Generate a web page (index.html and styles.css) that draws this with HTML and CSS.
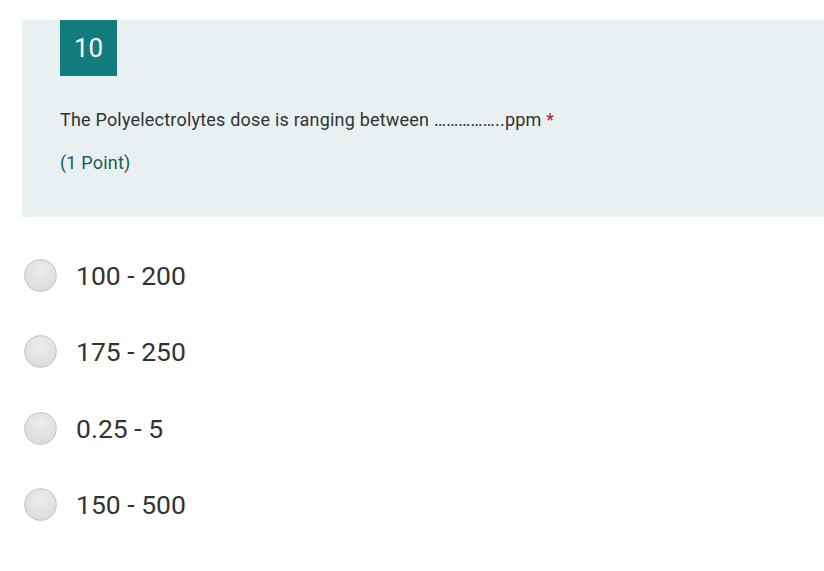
FILE: index.html
```html
<!DOCTYPE html>
<html>
<head>
<meta charset="utf-8">
<link rel="stylesheet" href="styles.css">
</head>
<body>
<div class="question">
  <div class="badge">10</div>
  <div class="title">The Polyelectrolytes dose is ranging between ……………..ppm <span class="req">*</span></div>
  <div class="points">(1 Point)</div>
</div>
<div class="options">
  <label class="option"><span class="radio"></span><span class="opt-text">100 - 200</span></label>
  <label class="option"><span class="radio"></span><span class="opt-text">175 - 250</span></label>
  <label class="option"><span class="radio"></span><span class="opt-text">0.25 - 5</span></label>
  <label class="option"><span class="radio"></span><span class="opt-text">150 - 500</span></label>
</div>
</body>
</html>
```
FILE: styles.css
```css
html, body {
  margin: 0;
  padding: 0;
  background: #ffffff;
  font-family: Roboto, "Liberation Sans", sans-serif;
}
.question {
  margin: 20px 0 0 22px;
  height: 197px;
  box-sizing: border-box;
  background: #e8f0f2;
  padding-left: 38px;
}
.badge {
  width: 57px;
  height: 56px;
  background: #127c7f;
  color: #ffffff;
  font-size: 26px;
  display: flex;
  align-items: center;
  justify-content: center;
}
.title {
  margin-top: 33px;
  font-size: 18px;
  letter-spacing: 0.2px;
  line-height: 22px;
  color: #333333;
}
.req {
  color: #a4262c;
}
.points {
  margin-top: 21px;
  font-size: 18px;
  letter-spacing: 0.2px;
  line-height: 22px;
  color: #1f5a55;
}
.options {
  display: flex;
  flex-direction: column;
  padding: 41px 0 0 24px;
  gap: 42.5px;
}
.option {
  display: flex;
  align-items: center;
  gap: 19px;
  height: 34px;
}
.radio {
  width: 31px;
  height: 31px;
  border-radius: 50%;
  border: 1px solid #c4c4c4;
  background: radial-gradient(circle at 50% 35%, #ececec 0%, #dedede 70%, #d6d6d6 100%);
  flex: none;
}
.opt-text {
  font-size: 26.5px;
  color: #333333;
}
```
